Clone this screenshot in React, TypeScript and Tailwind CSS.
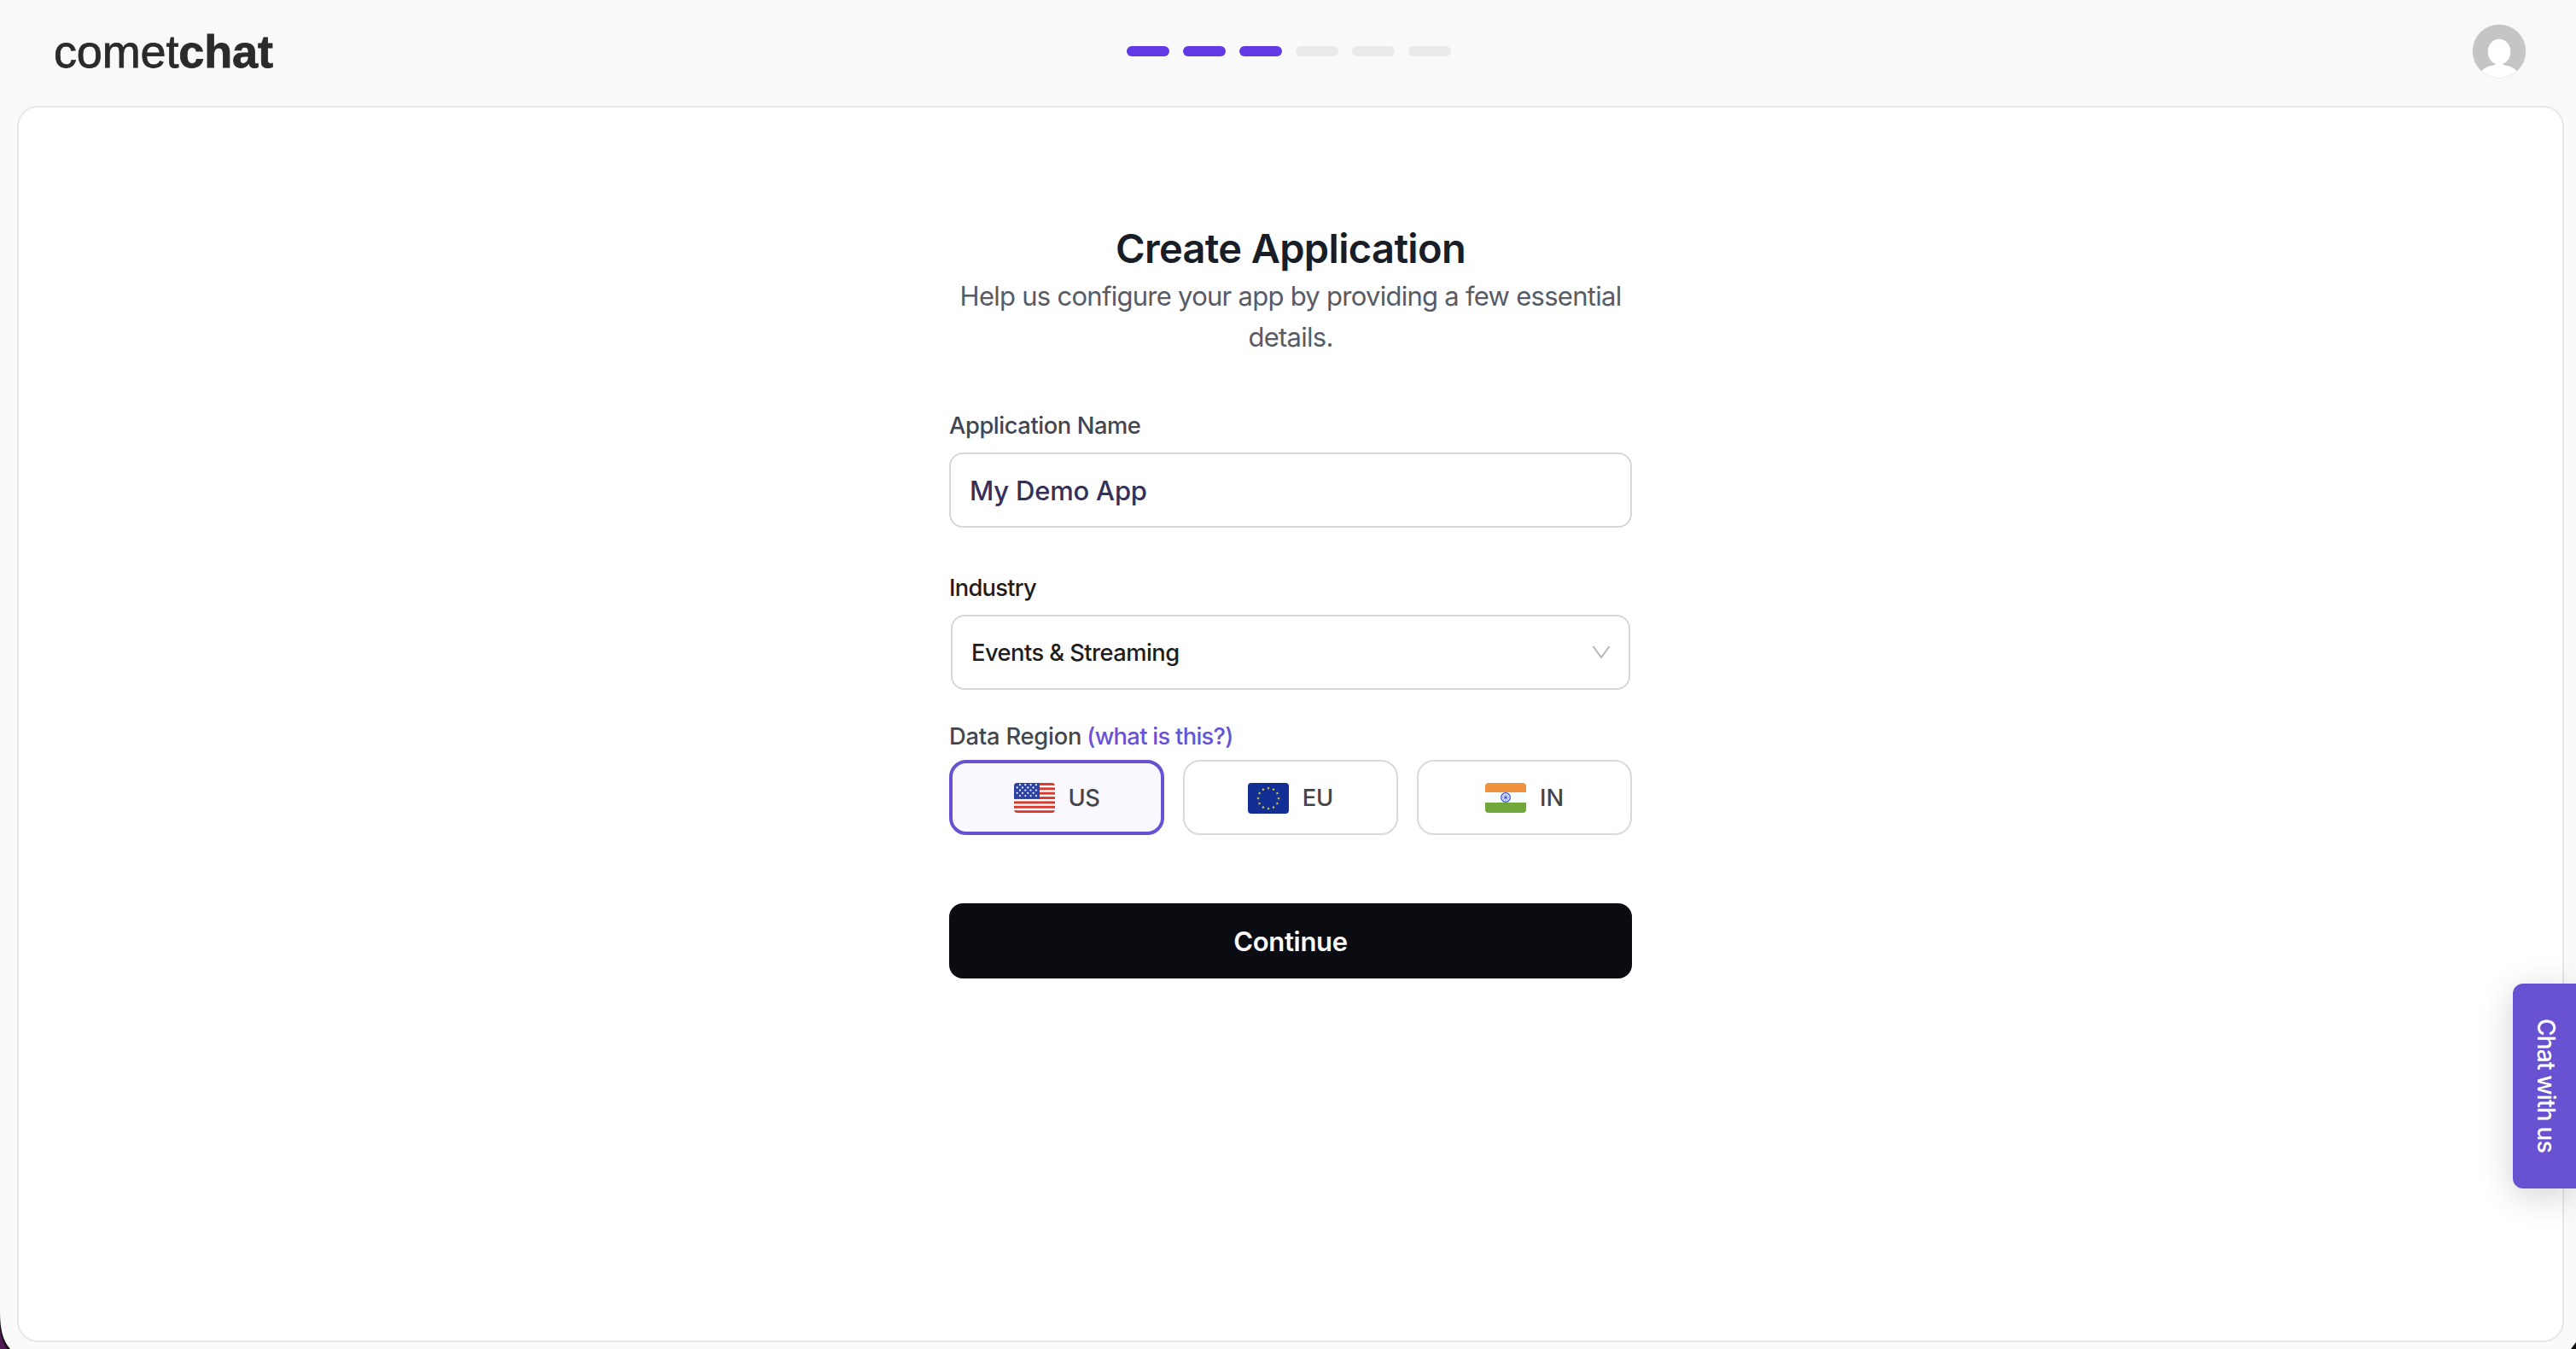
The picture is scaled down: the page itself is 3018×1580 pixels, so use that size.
const starRows = [2.2, 5.4, 8.6, 11.8, 15];

function UsFlag() {
  return (
    <svg width="48" height="35" viewBox="0 0 48 35" className="rounded-[4px]">
      <rect width="48" height="35" fill="#f7fcff" />
      {[0, 1, 2, 3, 4, 5, 6].map((i) => (
        <rect key={i} y={i * 5.36} width="48" height="2.9" fill="#d93a2c" />
      ))}
      <rect width="30" height="18.7" fill="#2e42a5" />
      {starRows.map((y, row) =>
        [0, 1, 2, 3].map((col) => (
          <circle key={`${row}-${col}`} cx={(row % 2 ? 3.7 : 7) + col * 6.3} cy={y} r="1.1" fill="#f7fcff" />
        ))
      )}
    </svg>
  );
}

function EuFlag() {
  return (
    <svg width="48" height="36" viewBox="0 0 48 36" className="mt-px rounded-[4px]">
      <rect width="48" height="36" fill="#112f95" />
      {Array.from({ length: 12 }, (_, i) => {
        const a = (i * Math.PI) / 6;
        return (
          <path
            key={i}
            transform={`translate(${24 + 12 * Math.sin(a)} ${18 - 12 * Math.cos(a)})`}
            d="M0-1.8.5-.6 1.8-.5.8.4 1.1 1.6 0 1-1.1 1.6-.8.4-1.8-.5-.5-.6Z"
            fill="#e0c93c"
          />
        );
      })}
    </svg>
  );
}

function InFlag() {
  return (
    <svg width="48" height="35" viewBox="0 0 48 35" className="rounded-[4px]">
      <rect width="48" height="35" fill="#f7fcff" />
      <rect width="48" height="11" fill="#f1933e" />
      <rect y="23" width="48" height="12" fill="#72a83b" />
      <circle cx="24" cy="17" r="5.3" fill="#e3e8fb" stroke="#3d58db" strokeWidth="1.3" />
      <path d="M24 13v8M20 17h8M21.2 14.2l5.6 5.6M21.2 19.8l5.6-5.6" stroke="#3d58db" strokeWidth=".6" />
      <circle cx="24" cy="17" r="1.5" fill="#3d58db" />
    </svg>
  );
}

const regions = [
  { code: 'US', flag: <UsFlag />, className: 'border-4 tracking-[-0.5px] border-[#6852d1] bg-[#f9f8fe]' },
  { code: 'EU', flag: <EuFlag />, className: 'border-2 border-[#dadada] bg-white' },
  { code: 'IN', flag: <InFlag />, className: 'border-2 border-[#dadada] bg-white' },
];

const steps = [true, true, true, false, false, false];

function Header() {
  return (
    <header className="grid grid-cols-3 items-center h-[124px] pl-[63px] pr-[58px] bg-[#f9f9f9]">
      <div className="pb-[5px] font-['Liberation_Sans',Arial,sans-serif] text-[54px] leading-[60px] tracking-[-0.15px] text-[#2a2b2d] [-webkit-text-stroke:0.8px_#2a2b2d]">
        comet<span className="font-bold">chat</span>
      </div>
      <div className="flex justify-center gap-4 -translate-x-px pb-1">
        {steps.map((done, i) => (
          <span key={i} className={`w-[50px] h-3 rounded-full ${done ? 'bg-[#6239e5]' : 'bg-[#e8eaeb]'}`} />
        ))}
      </div>
      <svg width="64" height="64" viewBox="0 0 64 64" className="justify-self-end -mt-1">
        <clipPath id="avatar">
          <circle cx="32" cy="32" r="31" />
        </clipPath>
        <circle cx="32" cy="32" r="31.5" fill="#e0e0e0" />
        <g clipPath="url(#avatar)">
          <rect width="64" height="64" fill="#c5c5c5" />
          <path d="M8 60C12 52 20 49 24 48.8c3-.4 4.200-1.500 4.300-2.800h7.400c.1 1.300 1.300 2.400 4.300 2.800C44 49 52 52 56 60v6H8Z" fill="#fff" />
          <ellipse cx="32" cy="32.700" rx="13.300" ry="15" fill="#fff" />
        </g>
      </svg>
    </header>
  );
}

export default function App() {
  return (
    <div className="relative flex flex-col w-[3018px] h-[1580px] overflow-hidden bg-[#fafafa] font-['Inter',sans-serif]">
      <Header />

      <main className="flex justify-center w-[2984px] h-[1448px] ml-5 pt-[133px] rounded-[24px] border-2 border-[#e8e8e8] bg-white">
        <div className="w-[800px]">
          <h1 className="text-center text-[47px] leading-[64px] font-semibold tracking-[-0.65px] text-[#181d26]">
            Create Application
          </h1>
          <p className="text-center text-[31px] leading-[48px] tracking-[-0.73px] text-[#575b66]">
            Help us configure your app by providing a few essential details.
          </p>

          <label className="block mt-[60px] text-[27.3px] leading-[40px] font-medium tracking-[-0.42px] text-[#414651]">
            Application Name
          </label>
          <div className="flex items-center h-[88px] mt-[11px] pt-[2px] px-[22px] rounded-[16px] border-2 border-[#d6d7dc] text-[31px] font-medium tracking-[-0.2px] text-[#352f5b]">
            My Demo App
          </div>

          <label className="block mt-[51px] text-[27.3px] leading-[40px] font-medium tracking-[-0.72px] text-[#1d1d1d]">
            Industry
          </label>
          <div className="flex items-center justify-between h-[88px] mt-[11px] mx-[2px] pl-[22px] pr-[21px] rounded-[16px] border-2 border-[#d6d7dc]">
            <span className="pt-[2px] text-[27.3px] font-medium tracking-[-0.55px] text-[#1d1d1d]">Events &amp; Streaming</span>
            <svg width="22" height="16" viewBox="0 0 22 16" fill="none">
              <path d="M1.500 1 11 14 20.500 1" stroke="#b8b8b8" strokeWidth="2" />
            </svg>
          </div>

          <p className="mt-[35px] text-[27.3px] leading-[40px] font-medium tracking-[-0.2px] text-[#414651]">
            Data Region <span className="-ml-px tracking-[-0.7px] text-[#6852d6]">(what is this?)</span>
          </p>
          <div className="grid grid-cols-3 gap-[22px] mt-[7px]">
            {regions.map((r) => (
              <button
                key={r.code}
                className={`flex items-center justify-center gap-4 h-[88px] rounded-[20px] text-[27.3px] font-medium text-[#434549] ${r.className}`}
              >
                {r.flag}
                <span className="pt-[2px]">{r.code}</span>
              </button>
            ))}
          </div>

          <button className="w-full h-[88px] mt-20 pt-[2px] rounded-[16px] bg-[#0b0c11] text-[31px] font-semibold tracking-[-0.31px] text-[#fafafa]">
            Continue
          </button>
        </div>
      </main>

      <button className="absolute right-0 top-[1152px] flex items-center justify-center w-[74px] h-[240px] pl-1 pb-px rounded-l-[12px] bg-[#6852d1] text-[28px] font-[550] tracking-[-0.78px] text-white [writing-mode:vertical-rl] shadow-[0_8px_40px_rgba(0,0,0,0.18)]">
        Chat with us
      </button>

      {/* rounded window corners */}
      <svg width="12" height="44" viewBox="0 0 12 44" className="absolute left-0 bottom-0">
        <path d="M0 0C0 20 3 34 12 44H0Z" fill="#111" />
        <path d="M0 19C1 29 3.500 37 8.500 44H0Z" fill="#511c54" />
      </svg>
      <svg width="6" height="8" viewBox="0 0 6 8" className="absolute right-0 bottom-0">
        <path d="M6 0V8H0Z" fill="#111" />
      </svg>
    </div>
  );
}
